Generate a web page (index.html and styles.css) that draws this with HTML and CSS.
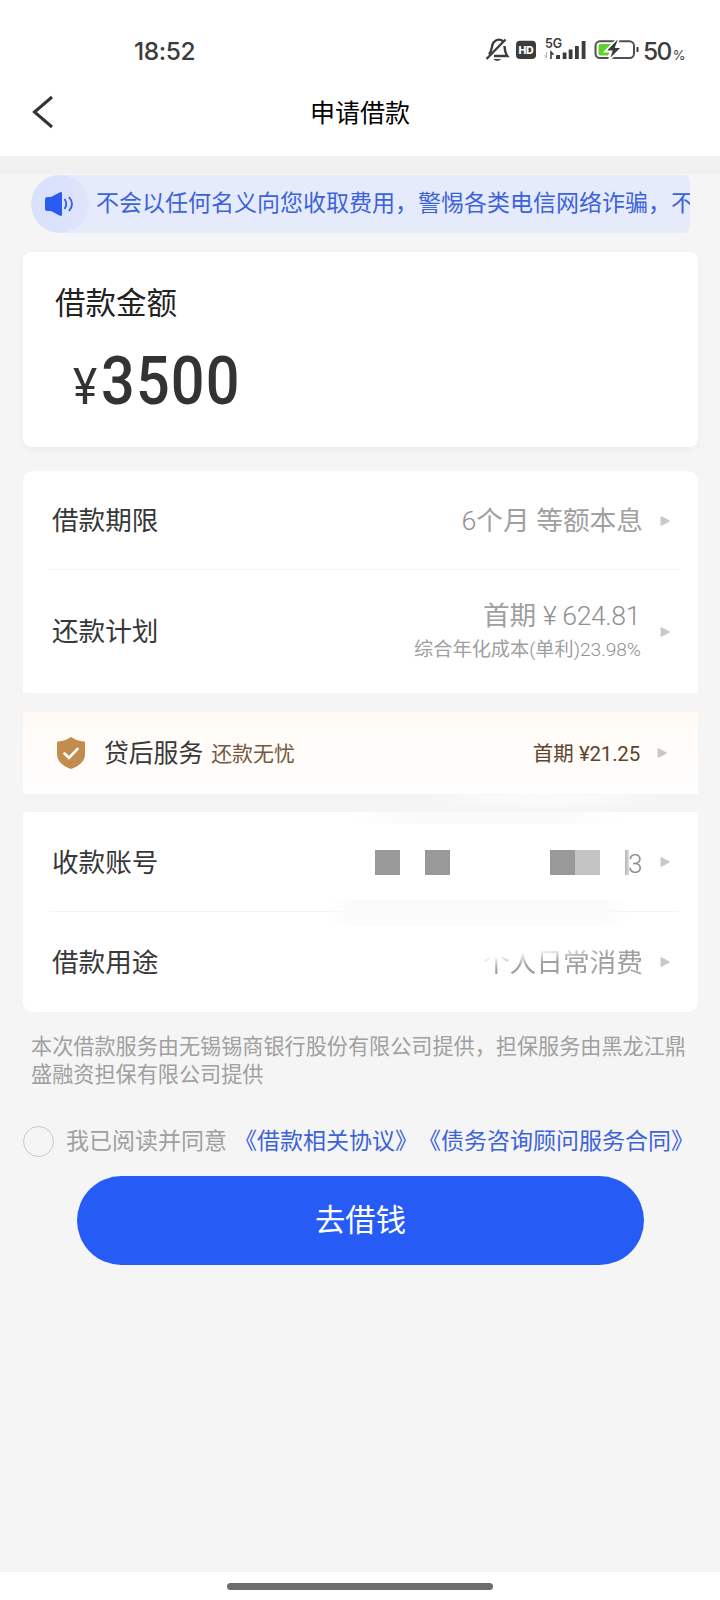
FILE: index.html
```html
<!DOCTYPE html>
<html lang="zh-CN">
<head>
<meta charset="utf-8">
<title>申请借款</title>
<link rel="stylesheet" href="styles.css">
</head>
<body>
<div class="screen">
  <header class="top">
    <div class="status">
      <span class="time">18:52</span>
      <svg class="status-icons" width="159" height="30" viewBox="0 0 159 30">
        <g fill="none" stroke="#3c3c3c" stroke-width="2.4">
          <path d="M5 19.500 C8.500 16 7 11 9.500 7.500 C12.500 3.800 17 4 19 6.500 M20.500 11 C20.800 15 21 18 23.300 21 H10"/>
          <path d="M2.500 24 21.500 4.500"/>
        </g>
        <path d="M9.500 24h7.500c-1.500 2.400-6 2.400-7.500 0z" fill="#3c3c3c"/>
        <rect x="32" y="5.800" width="20" height="18.200" rx="4" fill="#3c3c3c"/>
        <text class="hd" x="34.500" y="18.700" textLength="15">HD</text>
        <text class="net" x="61" y="12.800" textLength="17">5G</text>
        <path d="M62.500 17v6M60.500 20l2 3" stroke="#b5b5b5" fill="none"/>
        <path d="M67 24v-7l2.500 2.800" stroke="#3c3c3c" stroke-width="1.600" fill="none"/>
        <path d="M72 24v-3q0-1 1-1h3v4zM78.700 24v-6.500h3.800V24zM84.700 24V14.500h3.800V24zM91 24V11h3.800v13zM97.700 24V6h3.800v18z" fill="#3c3c3c"/>
        <rect x="111.500" y="6.300" width="38.500" height="16.700" rx="4.500" fill="#fff" stroke="#505050" stroke-width="2"/>
        <path d="M116.500 9h13.500l-6 11.500h-7.500q-2 0-2-2V11q0-2 2-2z" fill="#62d12f"/>
        <path d="M133 4 121 16.500h6.500l-3 9.500L138.500 12h-6.500l3-8z" fill="#3c3c3c" stroke="#fff" stroke-width="1.800"/>
        <path d="M153.500 12v5" stroke="#3c3c3c" stroke-width="2"/>
      </svg>
      <span class="pct">50<small>%</small></span>
    </div>
    <div class="nav">
      <svg class="back" width="24" height="34" viewBox="0 0 24 34"><path d="M21 2 3.500 17 21 32" fill="none" stroke="#333" stroke-width="3"/></svg>
      <h1 class="title">申请借款</h1>
    </div>
  </header>

  <main class="content">
    <div class="notice">
      <span class="horn">
        <svg width="32" height="26" viewBox="0 0 32 26">
          <path d="M4.500 6H8L17 1.200q2-.7 2 1.300v21q0 2-2 1.300L8 20H4.500Q2 20 2 17.500v-9Q2 6 4.500 6z" fill="#2a5bf2"/>
          <path d="M21.500 8q3.500 5 0 10M26 6q6 7 0 14" fill="none" stroke="#3563ee" stroke-width="1.900"/>
        </svg>
      </span>
      <span class="notice-text">不会以任何名义向您收取费用，警惕各类电信网络诈骗，不</span>
    </div>

    <section class="card amount">
      <h2 class="amount-label">借款金额</h2>
      <div class="amount-value"><span class="yen">¥</span><span class="num">3500</span></div>
    </section>

    <section class="card terms">
      <div class="row row-term">
        <span class="label">借款期限</span>
        <span class="value"><span class="digit">6</span>个月 等额本息</span>
        <svg class="arrow" width="10" height="10" viewBox="0 0 10 10"><path d="M1.500.3 9.300 4.200Q10 5 9.300 5.800L1.500 9.700Q.5 9.700.5 8.700V1.300Q.5.300 1.500.3z"/></svg>
      </div>
      <div class="row row-plan">
        <span class="label">还款计划</span>
        <span class="plan">
          <span class="value first">首期 <span class="digit first-num">¥ 624.81</span></span>
          <span class="rate">综合年化成本<span class="digit">(</span>单利<span class="digit rate-num">)23.98%</span></span>
        </span>
        <svg class="arrow" width="10" height="10" viewBox="0 0 10 10"><path d="M1.500.3 9.300 4.200Q10 5 9.300 5.800L1.500 9.700Q.5 9.700.5 8.700V1.300Q.5.300 1.500.3z"/></svg>
      </div>
    </section>

    <section class="service">
      <svg class="shield" width="30" height="34" viewBox="0 0 30 34">
        <path d="M15 1Q21 5 28 5.500q1 0 1 1V18c0 8-7 12.500-14 15C8 30.500 1 26 1 18V6.500q0-1 1-1Q9 5 15 1z" fill="#c28c4d"/>
        <path d="m8.500 17.500 4.500 4.300 8.500-9" fill="none" stroke="#fff" stroke-width="2.600" stroke-linecap="round"/>
      </svg>
      <span class="service-name">贷后服务</span>
      <span class="service-tag">还款无忧</span>
      <span class="service-fee">首期 <span class="fee-num">¥21.25</span></span>
      <svg class="arrow" width="10" height="10" viewBox="0 0 10 10"><path d="M1.500.3 9.300 4.200Q10 5 9.300 5.800L1.500 9.700Q.5 9.700.5 8.700V1.300Q.5.300 1.500.3z"/></svg>
    </section>

    <section class="card account">
      <span class="haze haze-gap"></span>
      <span class="haze haze-top"></span>
      <span class="haze haze-mid"></span>
      <div class="row row-account">
        <span class="label">收款账号</span>
        <span class="masked"><i class="block"></i><i class="block b2"></i><i class="block b3"></i><i class="block pale"></i><i class="sliver"></i><span class="tail">3</span></span>
        <svg class="arrow" width="10" height="10" viewBox="0 0 10 10"><path d="M1.500.3 9.300 4.200Q10 5 9.300 5.800L1.500 9.700Q.5 9.700.5 8.700V1.300Q.5.300 1.500.3z"/></svg>
      </div>
      <div class="row row-use">
        <span class="label">借款用途</span>
        <span class="value faded">个人日常消费</span>
        <svg class="arrow" width="10" height="10" viewBox="0 0 10 10"><path d="M1.500.3 9.300 4.200Q10 5 9.300 5.800L1.500 9.700Q.5 9.700.5 8.700V1.300Q.5.300 1.500.3z"/></svg>
      </div>
    </section>

    <p class="provider">本次借款服务由无锡锡商银行股份有限公司提供，担保服务由黑龙江鼎盛融资担保有限公司提供</p>

    <div class="agree">
      <span class="radio"></span>
      <span class="agree-text">我已阅读并同意</span>
      <span class="links">《借款相关协议》《债务咨询顾问服务合同》</span>
    </div>
    <button class="submit">去借钱</button>
  </main>
  <footer class="gesture"><span class="bar"></span></footer>
</div>
</body>
</html>
```
FILE: styles.css
```css
* { box-sizing: border-box; margin: 0; padding: 0; }
body {
  width: 720px;
  height: 1600px;
  overflow: hidden;
  background: #f5f5f5;
  font-family: Roboto, "Noto Sans CJK SC", sans-serif;
  font-weight: 400;
  text-spacing-trim: space-all;
  color: #383838;
}
.screen { height: 1600px; display: flex; flex-direction: column; }
.top { height: 156px; background: #fff; }
.status { height: 70px; padding: 30px 0 0 134px; display: flex; align-items: center; color: #3c3c3c; }
.time { width: 350px; flex: none; padding-top: 2px; font: 450 24.500px/40px Inter, sans-serif; letter-spacing: -.4px; }
.status-icons { flex: none; }
.hd { font: 800 10.500px Inter, sans-serif; fill: #fff; }
.net { font: 600 12.500px Inter, sans-serif; fill: #3c3c3c; }
.pct { padding-top: 1px; font: 450 24.500px/40px Inter, sans-serif; letter-spacing: -1.600px; white-space: nowrap; display: flex; align-items: baseline; }
.pct small { font-size: 13px; line-height: 20px; font-weight: 400; margin-left: 2px; }
.nav { height: 84px; padding-left: 31px; display: flex; align-items: center; }
.back { flex: none; }
.title { width: 610px; padding-top: 3px; text-align: center; font-size: 25px; font-weight: 400; line-height: 36px; color: #000; }

.content { flex: 1; padding: 0 22px 0 23px; border-top: 18px solid #f0f0f0; display: flex; flex-direction: column; }
.notice { height: 58px; margin: 1px 8px 0; background: #e6ebfc; border-radius: 29px 6px 6px 29px; display: flex; align-items: center; overflow: hidden; flex: none; }
.horn { width: 58px; height: 58px; flex: none; border-radius: 50%; background: linear-gradient(90deg, #d8e0fc, #dee4fb); display: flex; align-items: center; padding-left: 12px; }
.notice-text { margin-left: 7px; font-size: 23px; line-height: 36px; color: #3d63da; white-space: nowrap; }

.card { background: #fff; border-radius: 8px; flex: none; }
.amount { height: 195px; margin-top: 19px; padding: 29px 32px 0; box-shadow: 0 3px 8px rgba(0,0,0,.04); }
.amount-label { font-size: 30.500px; font-weight: 400; line-height: 46px; color: #222; }
.amount-value { display: flex; align-items: baseline; padding-left: 18px; height: 78px; line-height: 78px; margin-top: 16px; color: #333; }
.yen { font-size: 50px; font-weight: 400; width: 28px; transform: scaleX(.92); transform-origin: left; }
.num { font-size: 66px; font-weight: 550; transform: scaleX(.9); transform-origin: left; letter-spacing: 1.300px; }

.terms { height: 222px; margin-top: 24px; border-radius: 10px 10px 2px 2px; }
.row { display: flex; align-items: center; padding: 0 28px 0 29px; position: relative; }
.row-term { height: 99px; }
.row-account { height: 100px; }
.row-term::after, .row-account::after { content: ""; position: absolute; left: 26px; right: 19px; bottom: 0; height: 1px; background: #f3f3f3; }
.row-plan { height: 123px; }
.row-use { height: 100px; }
.label { font-size: 26.600px; line-height: 38px; flex: 1; padding-top: 1px; }
.value { font-size: 26.700px; line-height: 38px; padding-top: 1px; color: #a0a0a0; white-space: nowrap; }
.digit { font-weight: 300; color: #909090; }
.arrow { fill: #c9c9c9; flex: none; margin-left: 17px; }
.plan { display: flex; flex-direction: column; align-items: flex-end; }
.first { margin-right: 3px; padding: 0; line-height: 36px; position: relative; top: -1px; }
.first-num { letter-spacing: -.45px; }
.rate { font-size: 19.200px; line-height: 30px; margin-right: 2px; color: #a0a0a0; white-space: nowrap; }
.rate-num { letter-spacing: -.05px; }

.service { height: 82px; margin-top: 19px; padding: 0 31px 0 33px; display: flex; align-items: center; background: linear-gradient(#fffaf6, #fffefd); flex: none; border-radius: 2px; }
.shield { flex: none; }
.service-name { margin-left: 18px; font-size: 24.800px; line-height: 36px; padding-top: 1px; white-space: nowrap; }
.service-tag { margin-left: 8px; font-size: 20.900px; line-height: 32px; padding-top: 2px; color: #755641; flex: 1; }
.service-fee { font-size: 20.500px; line-height: 32px; padding-top: 2px; color: #61452c; white-space: nowrap; }
.fee-num { letter-spacing: -.2px; }

.account { height: 200px; margin-top: 18px; border-radius: 2px 2px 10px 10px; position: relative; }
.haze { position: absolute; }
.haze-gap { left: 400px; width: 240px; top: -18px; height: 18px; background: radial-gradient(ellipse at 50% 30%, #fcfcfc, rgba(252,252,252,0) 70%); }
.haze-top { left: 325px; width: 275px; top: 0; height: 12px; background: linear-gradient(90deg, transparent, #fafafa 25%, #fafafa 75%, transparent); }
.haze-mid { left: 305px; width: 300px; top: 88px; height: 25px; background: linear-gradient(90deg, transparent, #fbfbfb 8%, #fbfbfb 92%, transparent); z-index: 1; }
.masked { display: flex; align-items: center; height: 25px; margin-right: 1px; }
.block { width: 25px; height: 25px; background: #999; }
.b2 { margin-left: 25px; }
.b3 { margin-left: 100px; }
.pale { background: #c4c4c4; }
.sliver { margin-left: 25px; width: 4px; height: 25px; background: linear-gradient(90deg, #b4b4b4, #ddd); }
.tail { font-size: 26px; line-height: 38px; padding-top: 3px; font-weight: 300; color: #8c8c8c; width: 13px; text-indent: -1px; }
.faded { -webkit-mask-image: linear-gradient(172deg, transparent 24%, #000 46%); mask-image: linear-gradient(172deg, transparent 24%, #000 46%); }

.provider { margin: 21px 0 0 8px; font-size: 21.130px; line-height: 28px; width: 660px; color: #a0a0a0; flex: none; }
.agree { display: flex; align-items: center; height: 40px; margin-top: 32px; font-size: 23px; line-height: 36px; white-space: nowrap; flex: none; }
.radio { width: 31px; height: 31px; border: 1.500px solid #c8c8c8; border-radius: 50%; flex: none; }
.agree-text { margin-left: 12px; width: 168px; padding-top: 2px; color: #a0a0a0; }
.links { padding-top: 2px; color: #3d63da; }
.submit { margin: 15px 0 0 54px; width: 567px; height: 89px; border: 0; border-radius: 45px; background: #265cf5; color: #fff; font: 400 30.300px/44px Roboto, "Noto Sans CJK SC", sans-serif; flex: none; }
.gesture { height: 28px; background: #fff; display: flex; justify-content: center; padding-top: 11px; }
.bar { width: 266px; height: 7px; border-radius: 4px; background: #6c6e6d; }
```
